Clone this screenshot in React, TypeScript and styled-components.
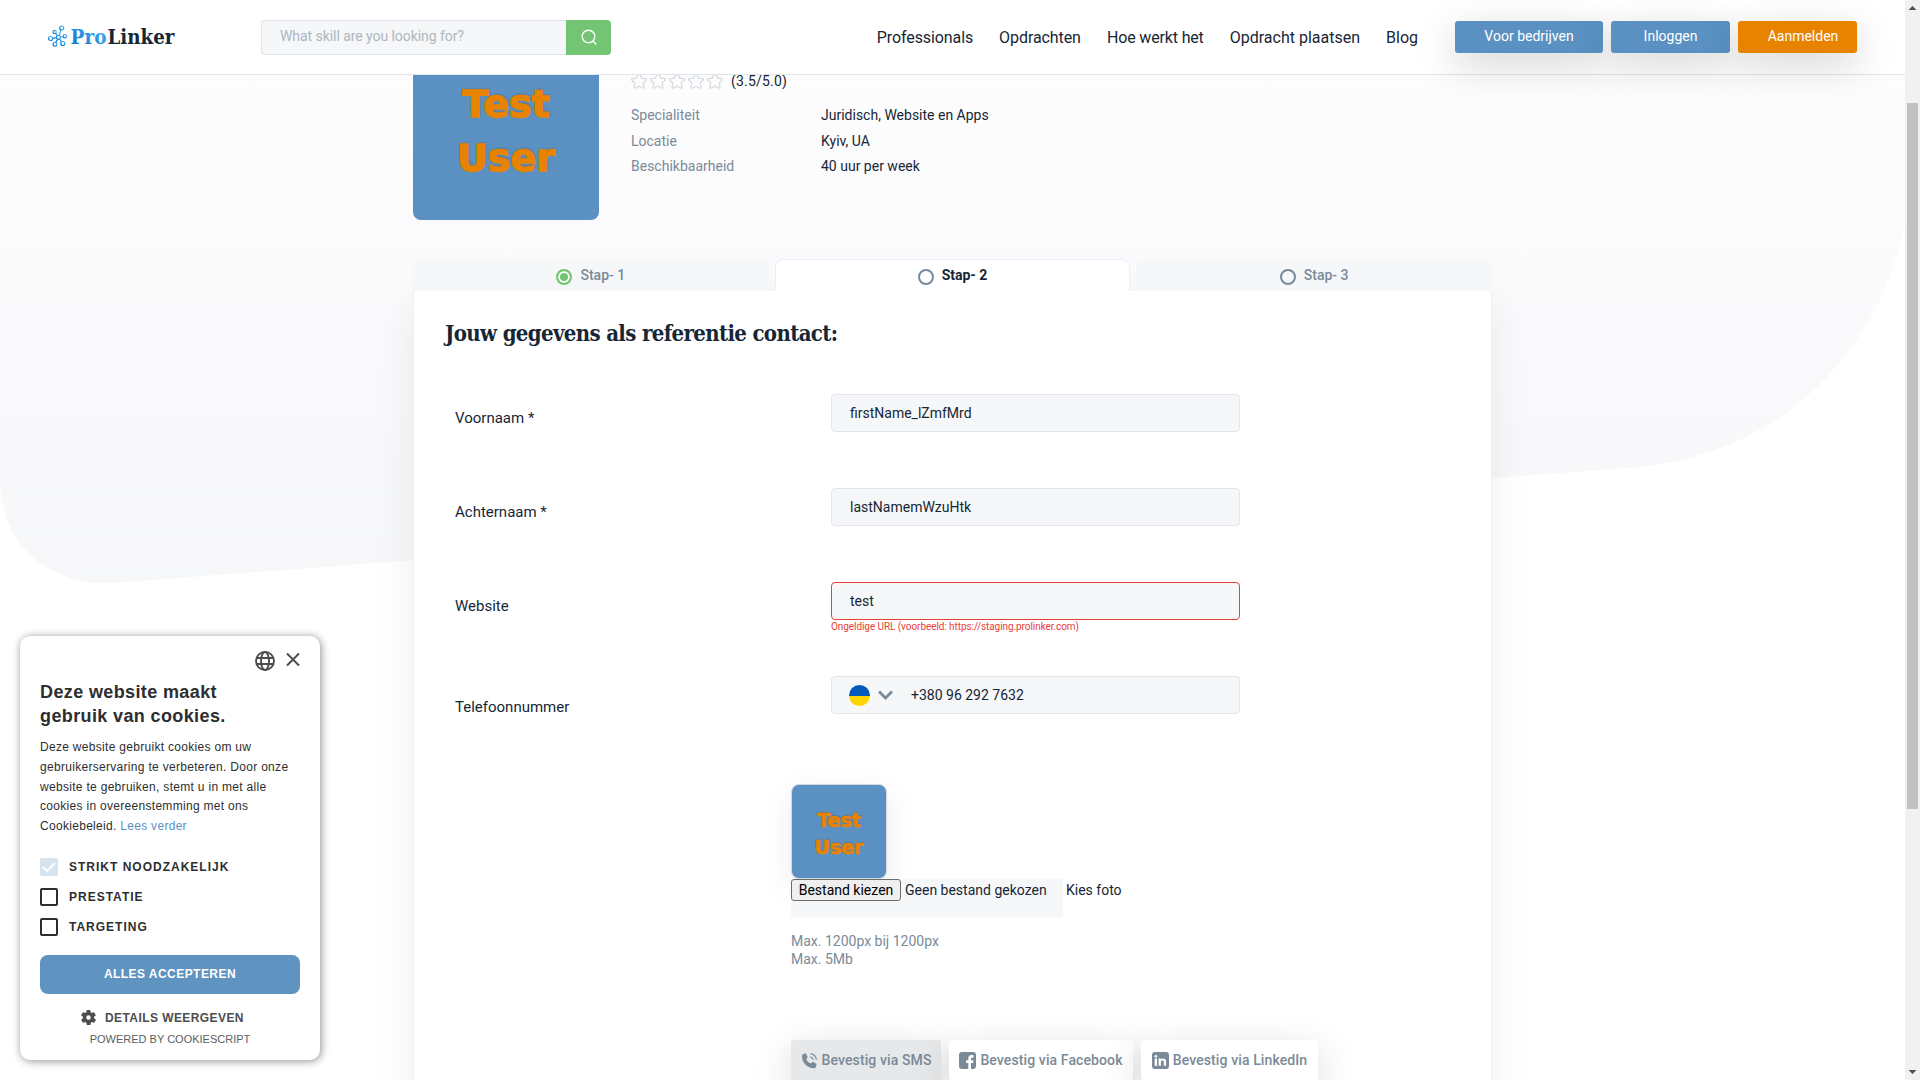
import React from 'react';
import styled, { createGlobalStyle, css } from 'styled-components';
import { FaStar } from 'react-icons/fa';

const ink = '#172635';
const muted = '#7a8a99';
const blue = '#5a91c2';
const orange = '#e88300';
const slab = '"Roboto Slab", "DejaVu Serif Condensed", "DejaVu Serif", serif';

const GlobalStyle = createGlobalStyle`
  * { box-sizing: border-box; }
  body { margin: 0; background: #fff; color: ${ink}; font-family: Roboto, "Liberation Sans", sans-serif; font-size: 14px; overflow: hidden; }
  button, input { font-family: inherit; }
  svg { display: block; flex: none; }
`;

const Page = styled.div`
  position: relative;
  display: grid;
  grid-template-columns: 1fr 15px;
  grid-template-rows: 75px 1005px;
  width: 1920px;
  height: 1080px;
  overflow: hidden;
`;
const Backdrop = styled.svg`
  position: absolute;
  inset: 0;
`;

const Header = styled.header`
  position: relative;
  z-index: 2;
  display: flex;
  align-items: center;
  height: 75px;
  padding: 0 48px;
  background: #fff;
  border-bottom: 1px solid #e0e5ea;
`;
const Logo = styled.a`
  display: flex;
  align-items: center;
  width: 213px;
`;
const Search = styled.form`
  display: flex;
  width: 350px;
  height: 35px;
`;
const SearchInput = styled.input`
  flex: 1;
  min-width: 0;
  padding: 0 18px 2px;
  border: 1px solid #dfe5ec;
  border-right: 0;
  border-radius: 4px 0 0 4px;
  background: #f5f7f9;
  font-size: 14px;
  letter-spacing: -0.06px;
  &::placeholder { color: #aeb6be; opacity: 1; }
`;
const SearchButton = styled.button`
  display: flex;
  align-items: center;
  justify-content: center;
  width: 45px;
  padding: 0;
  border: 0;
  border-radius: 0 4px 4px 0;
  background: #73c473;
`;
const Nav = styled.nav`
  display: flex;
  gap: 26px;
  margin-left: auto;
  font-size: 16px;
  white-space: nowrap;
`;
const NavItem = styled.span<{ $spacing: number }>`
  letter-spacing: ${p => p.$spacing}px;
`;
const HeaderButtons = styled.div`
  display: flex;
  gap: 8px;
  margin-left: 37px;
`;
const HeaderButton = styled.button<{ $width: number; $tone?: string; $shift?: number }>`
  width: ${p => p.$width}px;
  height: 32px;
  padding: 0 0 2px ${p => p.$shift ?? 0}px;
  border: 0;
  border-radius: 3px;
  background: ${p => p.$tone ?? blue};
  color: #fff;
  font-size: 14px;
  box-shadow: 0 12px 40px rgba(0, 0, 0, 0.18);
`;

const Main = styled.main`
  position: relative;
  width: 1079px;
  margin-left: 413px;
`;
const Profile = styled.section`
  display: flex;
  gap: 32px;
  height: 184px;
`;
const avatarText = css`
  display: flex;
  flex-direction: column;
  align-items: center;
  color: ${orange};
  font-family: "DejaVu Sans", sans-serif;
  font-weight: 700;
  background: ${blue};
`;
const Avatar = styled.div`
  ${avatarText}
  width: 186px;
  height: 145px;
  border-radius: 0 0 8px 8px;
  padding-top: 2px;
  font-size: 38px;
  line-height: 54px;
  -webkit-text-stroke: 1.4px ${orange};
  text-shadow: 1px -1px 2px rgba(100, 70, 40, 0.6);
`;
const Facts = styled.div`
  font-size: 14px;
`;
const Rating = styled.div`
  display: flex;
  align-items: center;
  height: 12px;
  margin-bottom: 16px;
  letter-spacing: 0.2px;
`;
const Stars = styled.div`
  display: flex;
  gap: 3px;
  margin-right: 8px;
`;
const Fact = styled.div`
  display: grid;
  grid-template-columns: 190px auto;
  height: 25.5px;
  line-height: 25px;
`;
const FactName = styled.span`
  color: ${muted};
`;

const Tabs = styled.div`
  display: flex;
  gap: 6px;
  height: 32px;
`;
const Tab = styled.div<{ $active?: boolean }>`
  position: relative;
  z-index: 1;
  display: flex;
  flex: 1;
  align-items: center;
  justify-content: center;
  gap: 8px;
  padding-bottom: 2px;
  border-radius: 8px 8px 0 0;
  background: ${p => (p.$active ? '#fff' : '#f5f7f9')};
  border: 1px solid ${p => (p.$active ? '#eeeefb' : '#f5f7f9')};
  border-bottom: 0;
  color: ${p => (p.$active ? ink : muted)};
  font-size: 14px;
  font-weight: ${p => (p.$active ? 700 : 500)};
`;
const Radio = styled.i<{ $done?: boolean }>`
  width: 16px;
  height: 16px;
  margin-top: 5px;
  border: 2px solid ${p => (p.$done ? '#73c473' : muted)};
  border-radius: 50%;
  background: ${p => (p.$done ? '#73c473' : 'transparent')};
  box-shadow: ${p => (p.$done ? 'inset 0 0 0 2px #fff' : 'none')};
`;
const Panel = styled.section`
  height: 840px;
  padding: 28px 31px;
  background: #fff;
  border: 1px solid #eeeefb;
  border-top: 0;
  box-shadow: 0 12px 40px rgba(0, 0, 0, 0.07);
`;
const Title = styled.h2`
  margin: 0 0 46px;
  font-family: ${slab};
  font-size: 22px;
  line-height: 29px;
  font-weight: 700;
  letter-spacing: -0.65px;
  white-space: nowrap;
`;
const FormRow = styled.div<{ $drop?: number }>`
  display: grid;
  grid-template-columns: 376px 409px;
  height: 94px;
  padding-left: 10px;
  label { padding-top: ${p => 14 + (p.$drop ?? 0)}px; font-size: 15px; line-height: 20px; }
`;
const Field = styled.div<{ $error?: boolean }>`
  display: flex;
  align-items: center;
  height: 38px;
  padding: 0 18px;
  border: 1px solid ${p => (p.$error ? '#e8413a' : '#e2e5e9')};
  border-radius: 4px;
  background: #f5f7f9;
  font-size: 14px;
`;
const ErrorText = styled.div`
  color: #e8413a;
  font-size: 10px;
  line-height: 13px;
  letter-spacing: -0.07px;
`;
const Flag = styled.i`
  width: 21px;
  height: 21px;
  margin: 0 8px 0 -1px;
  border-radius: 50%;
  background: linear-gradient(#005bbb 50%, #ffd500 50%);
`;
const PhoneValue = styled.span`
  margin-left: 18px;
`;
const Upload = styled.div`
  margin: 14px 0 0 346px;
`;
const Thumb = styled.div`
  ${avatarText}
  width: 96px;
  height: 95px;
  padding-top: 22px;
  border: 1px solid #d2d9df;
  border-radius: 8px;
  font-size: 19px;
  line-height: 27px;
  -webkit-text-stroke: 0.7px ${orange};
  text-shadow: 1px -1px 1px rgba(100, 70, 40, 0.4);
  box-shadow: 0 10px 32px rgba(0, 0, 0, 0.08);
`;
const FileRow = styled.div`
  display: flex;
  gap: 3px;
  line-height: 22px;
`;
const FileInput = styled.div`
  position: relative;
  display: flex;
  align-items: flex-start;
  gap: 4px;
  width: 272px;
  height: 38px;
  background: #f5f7f9;
`;
const FileButton = styled.button`
  height: 22px;
  width: 110px;
  padding: 0;
  border: 1px solid #6b6b6b;
  border-radius: 3px;
  background: #efefef;
  color: #000;
  font-size: 14px;
  line-height: 20px;
`;
const Hint = styled.p`
  margin: 15px 0 72px;
  color: ${muted};
  line-height: 18px;
`;
const Confirmations = styled.div`
  display: flex;
  gap: 8px;
`;
const Confirm = styled.button<{ $width: number; $active?: boolean }>`
  display: flex;
  align-items: center;
  justify-content: center;
  gap: 4px;
  width: ${p => p.$width}px;
  height: 40px;
  padding: 0;
  border: 0;
  border-radius: 3px;
  background: ${p => (p.$active ? '#e6e8ea' : '#fff')};
  color: ${muted};
  font-size: 14px;
  font-weight: 500;
  letter-spacing: 0.11px;
  white-space: nowrap;
  box-shadow: 0 12px 40px rgba(0, 0, 0, 0.16);
`;

const Scrollbar = styled.aside`
  position: relative;
  z-index: 3;
  grid-column: 2;
  grid-row: 1 / 3;
  display: flex;
  flex-direction: column;
  align-items: center;
  background: #f1f1f1;
`;
const ScrollThumb = styled.i`
  width: 11px;
  height: 706px;
  margin: 88px 0 auto;
  background: #c1c1c1;
`;

const Cookie = styled.section`
  position: absolute;
  z-index: 4;
  left: 20px;
  top: 636px;
  width: 300px;
  height: 424px;
  padding: 14px 20px;
  border-radius: 10px;
  background: #fff;
  color: #2c2e30;
  font-family: "Liberation Sans", Arial, sans-serif;
  box-shadow: 1px 1px 8px rgba(0, 0, 0, 0.45);
`;
const CookieTools = styled.div`
  display: flex;
  justify-content: flex-end;
  gap: 10px;
  height: 30px;
`;
const CookieTitle = styled.h3`
  margin: 0 0 10px;
  font-size: 18px;
  line-height: 24px;
  letter-spacing: 0.38px;
`;
const CookieText = styled.p`
  margin: 0 0 21px;
  font-size: 12px;
  line-height: 19.8px;
  letter-spacing: 0.3px;
  white-space: nowrap;
  a { color: ${blue}; }
`;
const Option = styled.div`
  display: flex;
  align-items: center;
  gap: 11px;
  height: 18px;
  margin-bottom: 12px;
  font-size: 12px;
  font-weight: 700;
  letter-spacing: 1px;
`;
const Checkbox = styled.i<{ $checked?: boolean }>`
  display: grid;
  place-items: center;
  width: 18px;
  height: 18px;
  border: ${p => (p.$checked ? 0 : 2)}px solid #2c2e30;
  border-radius: 2px;
  background: ${p => (p.$checked ? '#d6e4f0' : '#fff')};
`;
const Accept = styled.button`
  width: 260px;
  height: 39px;
  margin-top: 7px;
  padding: 0;
  border: 0;
  border-radius: 8px;
  background: #5e94bf;
  color: #fff;
  font-size: 12px;
  font-weight: 700;
  letter-spacing: 0.45px;
`;
const Details = styled.div`
  display: flex;
  align-items: center;
  gap: 9px;
  margin: 16px 0 7px 41px;
  color: #4b4d4f;
  font-size: 12px;
  line-height: 16px;
  font-weight: 700;
  letter-spacing: 0.42px;
`;
const Powered = styled.div`
  color: #5c5e60;
  font-size: 11px;
  line-height: 13px;
  text-align: center;
`;

const BrandLogo = () => (
  <svg width="136" height="34" viewBox="0 -4 136 34" aria-label="ProLinker">
    <defs>
      <linearGradient id="brand" x1="0" y1="1" x2="1" y2="0">
        <stop offset="0" stopColor="#0872c6" />
        <stop offset="1" stopColor="#4ab6ff" />
      </linearGradient>
    </defs>
    <g fill="none" stroke="url(#brand)" strokeWidth="1.2">
      <circle cx="13.7" cy="4" r="2" /><circle cx="6.600" cy="8" r="1.600" />
      <circle cx="2.600" cy="14.500" r="2" /><circle cx="16.800" cy="12.200" r="1.700" />
      <circle cx="7" cy="20.200" r="1.900" /><circle cx="14.800" cy="19.500" r="2" />
      <circle cx="10.400" cy="13.300" r="2" />
      <path d="M11.200 11.300 13 6M9.200 11.600 7.600 9.400M8.400 13.600 4.600 14.300M12.400 13 15.100 12.500M9.600 15.200 7.900 18.400M11.600 15 13.500 17.900" />
    </g>
    <text x="22.500" y="20.400" fontFamily={slab} fontSize="21" fontWeight="700" textLength="36" lengthAdjust="spacingAndGlyphs" fill="url(#brand)">Pro</text>
    <text x="59.500" y="20.400" fontFamily={slab} fontSize="21" fontWeight="700" textLength="67" lengthAdjust="spacingAndGlyphs" fill={ink}>Linker</text>
  </svg>
);

const navItems: [string, number][] = [
  ['Professionals', -0.1],
  ['Opdrachten', -0.08],
  ['Hoe werkt het', -0.15],
  ['Opdracht plaatsen', 0],
  ['Blog', 0],
];
const fields = [
  { label: 'Voornaam *', value: 'firstName_lZmfMrd' },
  { label: 'Achternaam *', value: 'lastNamemWzuHtk' },
  { label: 'Website', value: 'test', error: 'Ongeldige URL (voorbeeld: https://staging.prolinker.com)' },
];
const facts = [
  ['Specialiteit', 'Juridisch, Website en Apps'],
  ['Locatie', 'Kyiv, UA'],
  ['Beschikbaarheid', '40 uur per week'],
];

export default function App() {
  return (
    <>
      <GlobalStyle />
      <Page>
        <Backdrop width="1905" height="1080">
          <defs>
            <linearGradient id="wash" x1="0" y1="0" x2="0" y2="1">
              <stop offset="0.1" stopColor="#fdfdfe" />
              <stop offset="1" stopColor="#f6f7f9" />
            </linearGradient>
          </defs>
          <path d="M0 0H1905V220C1882 348 1785 452 1640 467L112 583C50 586 0 545 0 480Z" fill="url(#wash)" />
        </Backdrop>
        <Header>
          <Logo><BrandLogo /></Logo>
          <Search>
            <SearchInput placeholder="What skill are you looking for?" />
            <SearchButton type="button">
              <svg width="18" height="18" viewBox="0 0 18 18" fill="none" stroke="#fff" strokeWidth="1.4">
                <circle cx="8.5" cy="8.5" r="6.3" /><path d="m13 13 3.4 3.4" />
              </svg>
            </SearchButton>
          </Search>
          <Nav>
            {navItems.map(([label, spacing]) => <NavItem key={label} $spacing={spacing}>{label}</NavItem>)}
          </Nav>
          <HeaderButtons>
            <HeaderButton $width={148}>Voor bedrijven</HeaderButton>
            <HeaderButton $width={119}>Inloggen</HeaderButton>
            <HeaderButton $width={119} $tone={orange} $shift={11}>Aanmelden</HeaderButton>
          </HeaderButtons>
        </Header>
        <Main>
          <Profile>
            <Avatar><span>Test</span><span>User</span></Avatar>
            <Facts>
              <Rating>
                <Stars>
                  {[0, 1, 2, 3, 4].map(i => <FaStar key={i} size={16} color="transparent" stroke="#d6dbe0" strokeWidth={46} />)}
                </Stars>
                (3.5/5.0)
              </Rating>
              {facts.map(([name, value]) => <Fact key={name}><FactName>{name}</FactName><span>{value}</span></Fact>)}
            </Facts>
          </Profile>
          <Tabs>
            <Tab><Radio $done />Stap- 1</Tab>
            <Tab $active><Radio />Stap- 2</Tab>
            <Tab><Radio />Stap- 3</Tab>
          </Tabs>
          <Panel>
            <Title>Jouw gegevens als referentie contact:</Title>
            {fields.map(f => (
              <FormRow key={f.label}>
                <label>{f.label}</label>
                <div>
                  <Field $error={!!f.error}>{f.value}</Field>
                  {f.error && <ErrorText>{f.error}</ErrorText>}
                </div>
              </FormRow>
            ))}
            <FormRow $drop={7}>
              <label>Telefoonnummer</label>
              <Field>
                <Flag />
                <svg width="15" height="11" viewBox="0 0 15 11" fill="none" stroke={muted} strokeWidth="2.8"><path d="m1 1.500 6.500 6.500L14 1.500" /></svg>
                <PhoneValue>+380 96 292 7632</PhoneValue>
              </Field>
            </FormRow>
            <Upload>
              <Thumb><span>Test</span><span>User</span></Thumb>
              <FileRow>
                <FileInput><FileButton>Bestand kiezen</FileButton>Geen bestand gekozen</FileInput>
                <span>Kies foto</span>
              </FileRow>
              <Hint>Max. 1200px bij 1200px<br />Max. 5Mb</Hint>
              <Confirmations>
                <Confirm $width={150} $active>
                  <svg width="17" height="17" viewBox="0 0 17 17" fill={muted}>
                    <path d="M2 2.300 4 1.400c.6-.3 1 0 1.200.5l1.400 3c.2.500 0 .8-.3 1.100L5.200 7c.8 2 2.400 3.700 4.700 4.600l1-1.200c.4-.4.7-.5 1.200-.3l2.900 1.300c.5.200.7.700.5 1.200L14.800 15c-.3.800-1 1.300-1.900 1.300C6.500 16.300 1 10.700 1 4.200c0-.8.3-1.500 1-1.900Z" />
                    <path d="M9.300 4.800c1.700.3 2.700 1.300 3 3M9.500 1.600c3.300.400 5.400 2.600 6 6" fill="none" stroke={muted} strokeWidth="1.200" />
                  </svg>
                  Bevestig via SMS
                </Confirm>
                <Confirm $width={184}>
                  <svg width="17" height="17" viewBox="0 0 17 17">
                    <rect width="17" height="17" rx="3" fill={muted} />
                    <path d="M9.300 17v-6H7.100V8.200h2.200V6.500c0-2.200 1.200-3.400 3.200-3.400h2v2.600H13c-.7 0-1 .4-1 1v1.500h2.500l-.4 2.800H12v6Z" fill="#fff" />
                  </svg>
                  Bevestig via Facebook
                </Confirm>
                <Confirm $width={177}>
                  <svg width="17" height="17" viewBox="0 0 17 17">
                    <rect width="17" height="17" rx="3" fill={muted} />
                    <path d="M2.700 6.600H5v7.200H2.700ZM6.600 6.600h2.200v1c.5-.8 1.300-1.200 2.300-1.200 2 0 3 1.200 3 3.400v4h-2.300v-3.600c0-1.100-.4-1.700-1.300-1.700s-1.600.6-1.600 1.800v3.500H6.600Z" fill="#fff" />
                    <circle cx="3.850" cy="4.300" r="1.300" fill="#fff" />
                  </svg>
                  Bevestig via LinkedIn
                </Confirm>
              </Confirmations>
            </Upload>
          </Panel>
        </Main>
        <Scrollbar>
          <svg width="15" height="15" viewBox="0 0 15 15"><path d="M3.500 10h8l-4-4Z" fill="#505050" /></svg>
          <ScrollThumb />
          <svg width="15" height="15" viewBox="0 0 15 15"><path d="M3.500 5h8l-4 4Z" fill="#505050" /></svg>
        </Scrollbar>
        <Cookie>
          <CookieTools>
            <svg width="22" height="22" viewBox="0 0 22 22" fill="none" stroke="#4b4d4f" strokeWidth="1.900">
              <circle cx="11" cy="11" r="9" /><ellipse cx="11" cy="11" rx="4" ry="9" /><path d="M2.500 8h17M2.500 14h17" />
            </svg>
            <svg width="14" height="20" viewBox="0 0 14 20" fill="none" stroke="#4b4d4f" strokeWidth="2"><path d="m1 3.500 12 12M13 3.500 1 15.500" /></svg>
          </CookieTools>
          <CookieTitle>Deze website maakt<br />gebruik van cookies.</CookieTitle>
          <CookieText>
            Deze website gebruikt cookies om uw<br />gebruikerservaring te verbeteren. Door onze<br />website te gebruiken, stemt u in met alle<br />cookies in overeenstemming met ons<br />Cookiebeleid. <a>Lees verder</a>
          </CookieText>
          <Option>
            <Checkbox $checked><svg width="14" height="12" viewBox="0 0 14 12" fill="none" stroke="#fff" strokeWidth="2"><path d="m1 6 4 4 8-8" /></svg></Checkbox>
            STRIKT NOODZAKELIJK
          </Option>
          <Option><Checkbox />PRESTATIE</Option>
          <Option><Checkbox />TARGETING</Option>
          <Accept>ALLES ACCEPTEREN</Accept>
          <Details>
            <svg width="15" height="15" viewBox="2 2 20 20" fill="#4b4d4f"><path d="M19.400 13a7.500 7.500 0 0 0 0-2l2.100-1.600c.2-.2.300-.4.100-.7l-2-3.400c-.1-.2-.4-.3-.6-.2l-2.500 1a7.300 7.300 0 0 0-1.700-1l-.4-2.700A.5.500 0 0 0 14 2h-4a.5.500 0 0 0-.5.400l-.4 2.700c-.6.3-1.200.6-1.700 1l-2.500-1c-.2-.1-.5 0-.6.200l-2 3.400c-.1.200-.1.500.1.700L4.600 11a7.500 7.500 0 0 0 0 2l-2.100 1.600c-.2.200-.2.400-.1.700l2 3.400c.1.200.4.300.6.200l2.500-1c.5.400 1.100.7 1.700 1l.4 2.700c0 .2.200.4.500.4h4c.2 0 .5-.2.500-.4l.4-2.700c.6-.3 1.200-.6 1.700-1l2.500 1c.2.100.5 0 .6-.2l2-3.400c.1-.2.100-.5-.1-.7ZM12 15a3 3 0 1 1 0-6 3 3 0 0 1 0 6Z" /></svg>
            DETAILS WEERGEVEN
          </Details>
          <Powered>POWERED BY COOKIESCRIPT</Powered>
        </Cookie>
      </Page>
    </>
  );
}
